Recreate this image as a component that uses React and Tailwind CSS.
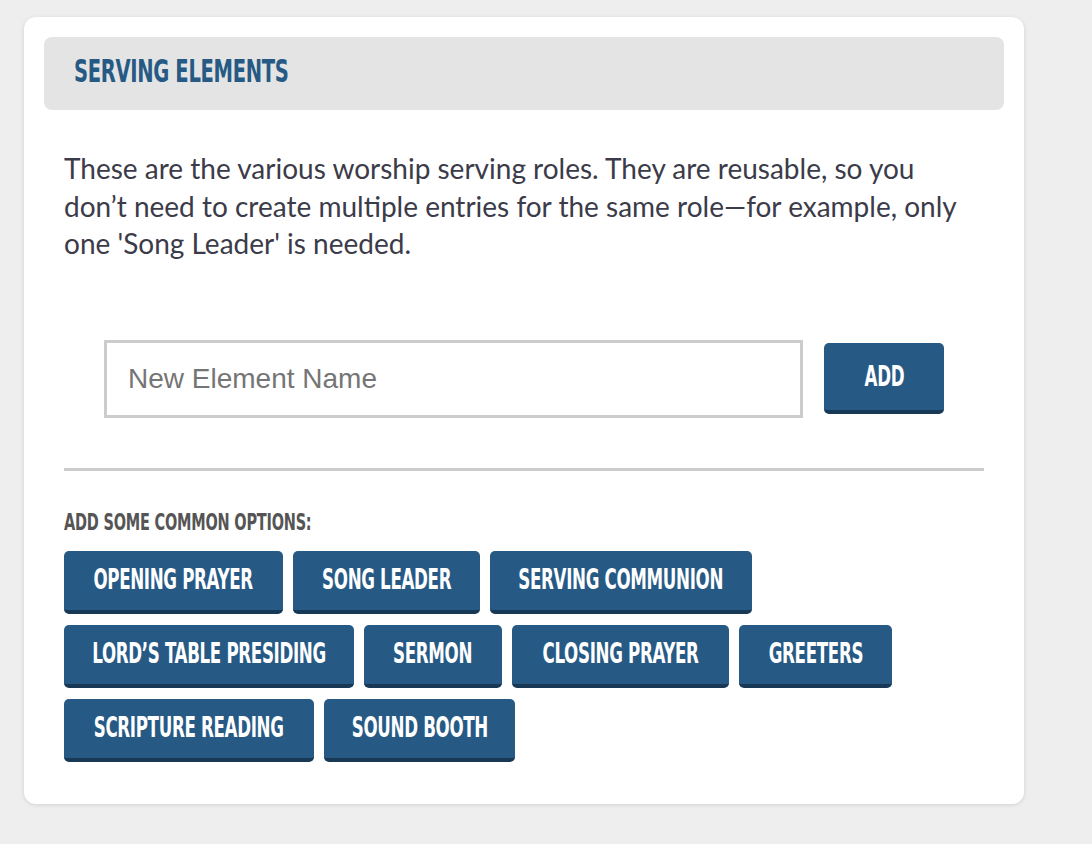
import React from "react";

const cond = { fontFamily: '"DejaVu Sans Condensed", "DejaVu Sans", sans-serif' };

const rows = [
  [
    ["OPENING PRAYER", "w-[219px]"],
    ["SONG LEADER", "w-[187px]"],
    ["SERVING COMMUNION", "w-[262px]"],
  ],
  [
    ["LORD’S TABLE PRESIDING", "w-[290px]"],
    ["SERMON", "w-[138px]"],
    ["CLOSING PRAYER", "w-[217px]"],
    ["GREETERS", "w-[153px]"],
  ],
  [
    ["SCRIPTURE READING", "w-[250px]"],
    ["SOUND BOOTH", "w-[191px]"],
  ],
];

function Btn({ label, w }) {
  return (
    <button
      className={`${w} h-[63px] flex items-center justify-center rounded-[5px] bg-[#265a85] border-b-4 border-[#183955] text-white`}
    >
      <span
        className="inline-block whitespace-nowrap font-bold text-[27.5px] tracking-[-0.5px] leading-none scale-x-[0.675]"
        style={cond}
      >
        {label}
      </span>
    </button>
  );
}

export default function App() {
  return (
    <div className="min-h-[844px] bg-[#eeeeee] pt-[17px] pl-[24px]">
      <div className="w-[1000px] bg-white rounded-[12px] shadow-[0_1px_4px_rgba(0,0,0,0.12)] p-[20px] pb-[42px]">
        <div className="h-[73px] bg-[#e4e4e4] rounded-[8px] flex items-center pl-[30px] pb-[4px]">
          <h2
            className="inline-block whitespace-nowrap origin-left text-[#265a85] font-bold text-[31.5px] tracking-[-0.5px] leading-none scale-x-[0.69]"
            style={cond}
          >
            SERVING ELEMENTS
          </h2>
        </div>
        <div className="px-[20px]">
          <p
            className="mt-[40px] text-[28px] leading-[37.5px] text-[#3b3b49] w-[905px]"
            style={{ fontFamily: 'Lato, "Open Sans", sans-serif' }}
          >
            These are the various worship serving roles. They are reusable, so you don’t need to create multiple entries for the same role—for example, only one 'Song Leader' is needed.
          </p>
          <div className="mt-[77px] flex items-center justify-center gap-[21px]">
            <input
              type="text"
              placeholder="New Element Name"
              className="w-[699px] h-[78px] border-[3px] border-[#cccccc] px-[21px] text-[28px] text-[#333] placeholder:text-[#757575] outline-none"
              style={{ fontFamily: '"Liberation Sans", Arial, sans-serif' }}
            />
            <button className="w-[120px] h-[71px] flex items-center justify-center rounded-[5px] bg-[#265a85] border-b-4 border-[#183955] text-white">
              <span
                className="inline-block whitespace-nowrap font-bold text-[27.5px] tracking-[-0.5px] leading-none scale-x-[0.675]"
                style={cond}
              >
                ADD
              </span>
            </button>
          </div>
          <div className="mt-[50px] h-[3px] bg-[#cccccc]" />
          <div className="mt-[40px]">
            <span
              className="inline-block whitespace-nowrap origin-left text-[#555555] font-bold text-[23px] leading-none tracking-[-0.3px] scale-x-[0.7]"
              style={cond}
            >
              ADD SOME COMMON OPTIONS:
            </span>
          </div>
          <div className="mt-[15px] flex flex-col gap-[11px]">
            {rows.map((row, i) => (
              <div key={i} className="flex gap-[10px]">
                {row.map(([t, w]) => (
                  <Btn key={t} label={t} w={w} />
                ))}
              </div>
            ))}
          </div>
        </div>
      </div>
    </div>
  );
}
